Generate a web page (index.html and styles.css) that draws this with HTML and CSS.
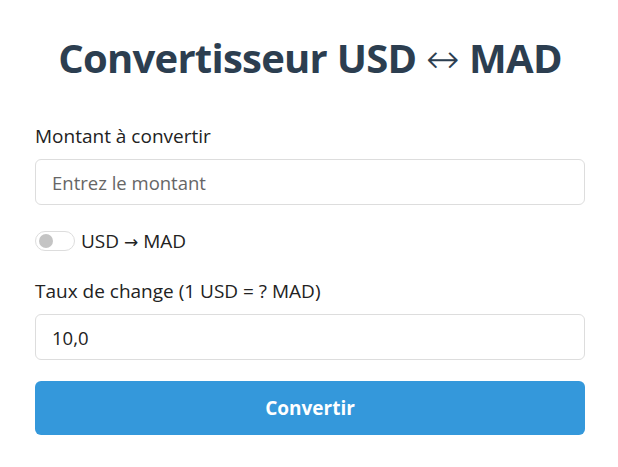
FILE: index.html
```html
<!DOCTYPE html>
<html lang="fr">
<head>
<meta charset="utf-8">
<link rel="stylesheet" href="styles.css">
</head>
<body>
<div class="container">
  <h1 class="title">Convertisseur USD <span class="arrow">↔</span> MAD</h1>
  <label class="label" for="amount">Montant à convertir</label>
  <input class="field" id="amount" type="text" placeholder="Entrez le montant">
  <div class="switch-row">
    <span class="switch"><span class="knob"></span></span>
    <span class="switch-text">USD <span class="arrow-sm">→</span> MAD</span>
  </div>
  <label class="label" for="rate">Taux de change (1 USD = ? MAD)</label>
  <input class="field" id="rate" type="text" value="10,0">
  <button class="btn">Convertir</button>
</div>
</body>
</html>
```
FILE: styles.css
```css
* { box-sizing: border-box; }
html, body { margin: 0; background: #fff; }
body { font-family: "Open Sans", "Noto Sans", sans-serif; color: #222; }
.container {
  width: 550px;
  margin: 0 0 0 35px;
  padding-top: 28px;
  display: flex;
  flex-direction: column;
}
.title {
  margin: 0 0 36px;
  text-align: center;
  font-size: 40px;
  line-height: 60px;
  height: 60px;
  font-weight: 700;
  color: #2c3e50;
  letter-spacing: -0.75px;
}
.arrow {
  font-family: "DejaVu Sans", sans-serif;
  font-weight: 200;
  font-size: 40px;
  line-height: 0;
  letter-spacing: 0;
}
.arrow-sm {
  font-family: "DejaVu Sans", sans-serif;
  font-size: 17px;
  line-height: 0;
}
.label {
  font-size: 19px;
  line-height: 24px;
  margin-bottom: 11px;
}
.field {
  height: 46px;
  border: 1px solid #ddd;
  border-radius: 6px;
  padding: 0 16px;
  font: inherit;
  font-size: 18.5px;
  color: #222;
  outline: none;
}
.field::placeholder { color: #666; }
.switch-row {
  display: flex;
  align-items: center;
  gap: 6px;
  margin: 26px 0 28px;
  height: 20px;
}
.switch {
  width: 40px;
  height: 20px;
  border: 1px solid #ddd;
  border-radius: 10px;
  display: flex;
  align-items: center;
  padding-left: 3px;
}
.knob {
  width: 14px;
  height: 14px;
  border-radius: 50%;
  background: #c4c4c4;
}
.switch-text { font-size: 19px; line-height: 24px; }
#rate { margin-bottom: 21px; }
.btn {
  height: 54px;
  border: none;
  border-radius: 6px;
  background: #3498db;
  color: #fff;
  font: inherit;
  font-size: 19px;
  font-weight: 700;
}
```
